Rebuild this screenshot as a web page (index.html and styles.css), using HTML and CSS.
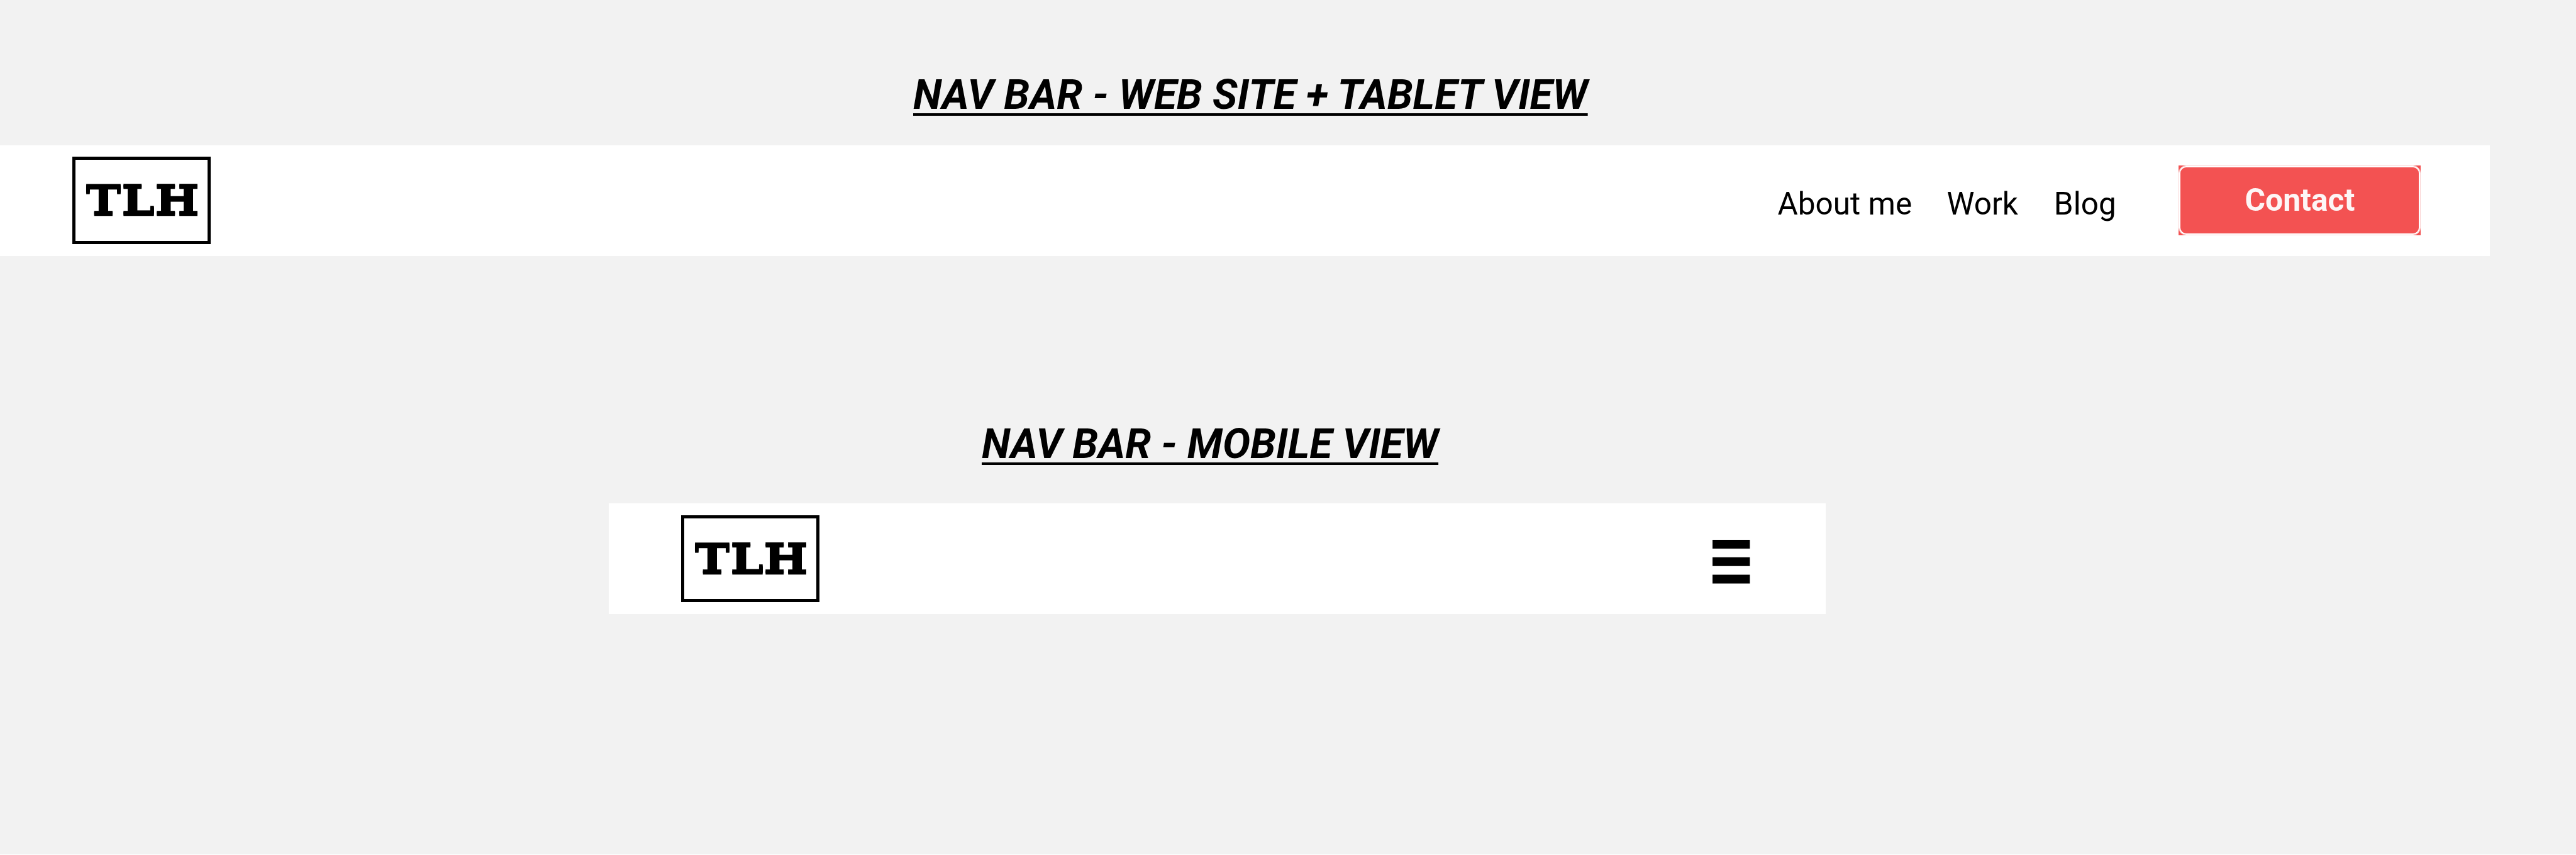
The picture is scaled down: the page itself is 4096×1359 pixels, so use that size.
FILE: index.html
```html
<!DOCTYPE html>
<html lang="en">
<head>
<meta charset="utf-8">
<title>Nav bar</title>
<link rel="stylesheet" href="styles.css">
</head>
<body>
<main class="board">
  <h2 class="title title-web"><span>NAV BAR - WEB SITE + TABLET VIEW</span></h2>
  <header class="bar bar-web">
    <a class="logo"><svg width="211" height="128" viewBox="5 5 211 128"><text transform="scale(1.17 1)" x="18.3 66.8 112.2" y="92.2">TLH</text></svg></a>
    <nav class="links">
      <a class="about">About me</a>
      <a class="work">Work</a>
      <a class="blog">Blog</a>
    </nav>
    <a class="contact"><span class="fill">Contact</span></a>
  </header>
  <h2 class="title title-mobile"><span>NAV BAR - MOBILE VIEW</span></h2>
  <header class="bar bar-mobile">
    <a class="logo"><svg width="211" height="128" viewBox="5 5 211 128"><text transform="scale(1.17 1)" x="18.3 66.8 112.2" y="92.2">TLH</text></svg></a>
    <svg class="menu" width="59.4" height="70" viewBox="0 0 60 70.7" preserveAspectRatio="none"><path d="M0 0h60v14.2H0zM0 28h60v14.2H0zM0 56h60v14.2H0z"/></svg>
  </header>
</main>
</body>
</html>
```
FILE: styles.css
```css
* { box-sizing: border-box; }
body { margin: 0; font-family: Roboto, sans-serif; color: #000; background: #f2f2f2; }
.board { height: 1359px; display: flex; flex-direction: column; align-items: flex-start; overflow: hidden; border-bottom: 1px solid #fff; }
.title { margin: 0; font-size: 66px; line-height: 78px; font-weight: 700; font-style: italic; white-space: nowrap; text-decoration: underline; text-decoration-thickness: 3.5px; text-underline-offset: 6.5px; text-decoration-skip-ink: none; }
.title-web { margin: 112px 0 0 1452px; height: 118.6px; }
.title-mobile { margin: 260px 0 0 1561px; height: 133.2px; }
.bar { display: flex; align-items: flex-start; height: 176px; background: #fff; }
.bar-web { width: 3958.5px; padding-left: 114.8px; }
.bar-mobile { width: 1935px; margin-left: 968px; padding-left: 114.8px; }
.logo { flex: none; width: 220.7px; height: 138.5px; margin-top: 18.8px; border: 5px solid #000; }
.logo svg { display: block; overflow: visible; }
.logo text { font: 700 64px "DejaVu Serif", serif; stroke: #000; stroke-width: 0.6px; text-shadow: 0 2px #000, 0 -2px #000; }
.links { display: flex; margin: 64px 0 0 2491px; font-size: 49.5px; line-height: 58px; white-space: nowrap; }
.work { margin-left: 55.3px; }
.blog { margin-left: 57px; }
.contact { display: flex; flex: none; width: 385px; height: 110.8px; margin: 32.7px 0 0 99.7px; background: #f35252; }
.fill { flex: 1; border: 1px solid #fbd4d4; border-radius: 12px; background: #f35252; box-shadow: inset 0 0 0 2px #fff; color: #fdf6f6; font-size: 49.8px; line-height: 108px; font-weight: 700; text-align: center; }
.menu { flex: none; margin: 58px 0 0 1420px; }
```
